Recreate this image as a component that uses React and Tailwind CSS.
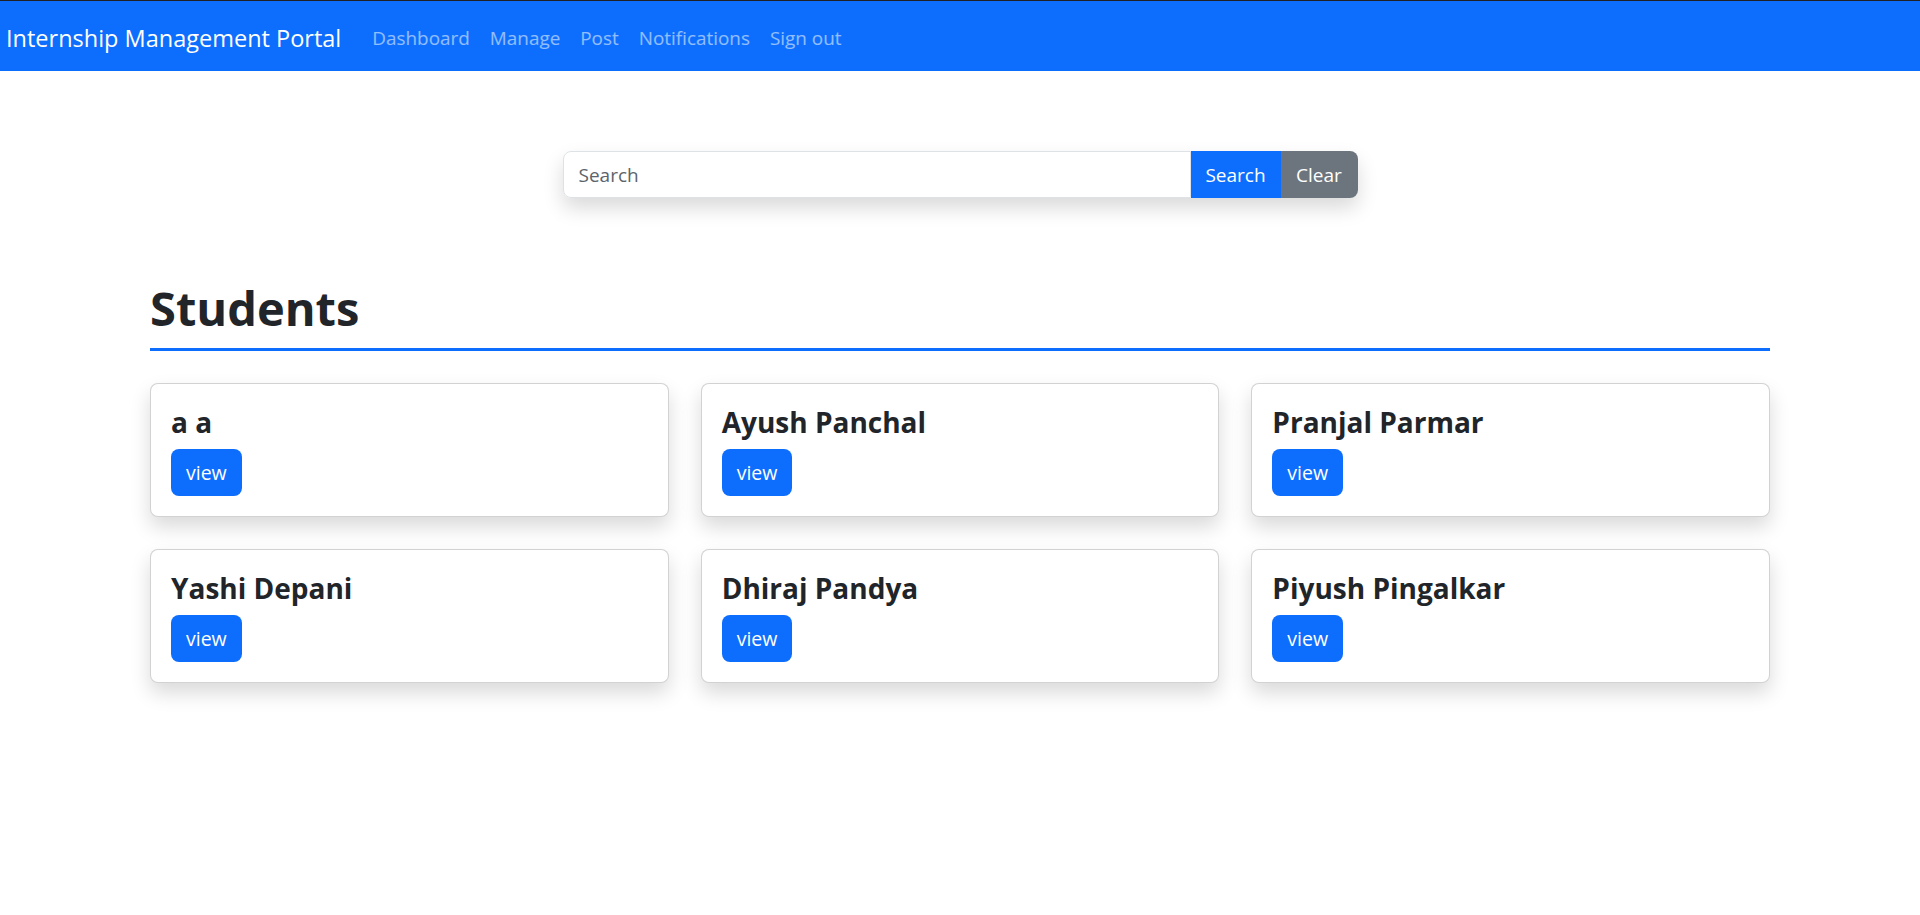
import React from 'react'

const students = [
  'a a',
  'Ayush Panchal',
  'Pranjal Parmar',
  'Yashi Depani',
  'Dhiraj Pandya',
  'Piyush Pingalkar',
]

const links = ['Dashboard', 'Manage', 'Post', 'Notifications', 'Sign out']

export default function App() {
  return (
    <div className="min-h-screen bg-white text-[#212529] font-['Open_Sans',sans-serif]">

      {/* ── Navbar ─────────────────────────────────────────── */}
      <nav className="flex items-center h-[71px] border-t border-[#1f2124] bg-[#0d6efd] pl-[6px] pt-[4px]">
        <a className="text-[23.5px] text-white mr-[21px] leading-[38px]">Internship Management Portal</a>
        <ul className="flex items-center">
          {links.map((l) => (
            <li key={l}>
              <a className="block px-[10px] text-[18.9px] leading-[30px] text-white/55">{l}</a>
            </li>
          ))}
        </ul>
      </nav>

      <main className="w-[1620px] mx-auto">

        {/* Search */}
        <form className="flex w-[795px] h-[47px] mx-auto mt-[80px] rounded-[8px] shadow-[0_10px_20px_rgba(0,0,0,0.15)]">
          <input
            placeholder="Search"
            className="flex-1 min-w-0 border border-[#dee2e6] rounded-l-[8px] px-[15px] pt-[2px] text-[19px] outline-none placeholder:text-[#5c636a]"
          />
          <button type="button" className="w-[90px] pt-[2px] bg-[#0d6efd] text-white text-[19px]">Search</button>
          <button type="button" className="w-[77px] pt-[2px] bg-[#6c757d] text-white text-[19px] rounded-r-[8px]">Clear</button>
        </form>

        {/* Heading */}
        <h1 className="mt-[80px] text-[47px] font-bold leading-[60px] pb-[10px] border-b-[3px] border-[#0d6efd]">
          Students
        </h1>

        {/* Cards */}
        <div className="grid grid-cols-3 gap-[32px] mt-[32px]">
          {students.map((name) => (
            <div key={name}
              className="border border-black/[0.175] rounded-[8px] bg-white p-[20px] shadow-[0_10px_20px_rgba(0,0,0,0.15)]">
              <h4 className="text-[28px] font-bold leading-[36px] mb-[9px]">{name}</h4>
              <button type="button"
                className="h-[47px] px-[15px] rounded-[8px] bg-[#0d6efd] text-white text-[19.5px]">
                view
              </button>
            </div>
          ))}
        </div>
      </main>
    </div>
  )
}
